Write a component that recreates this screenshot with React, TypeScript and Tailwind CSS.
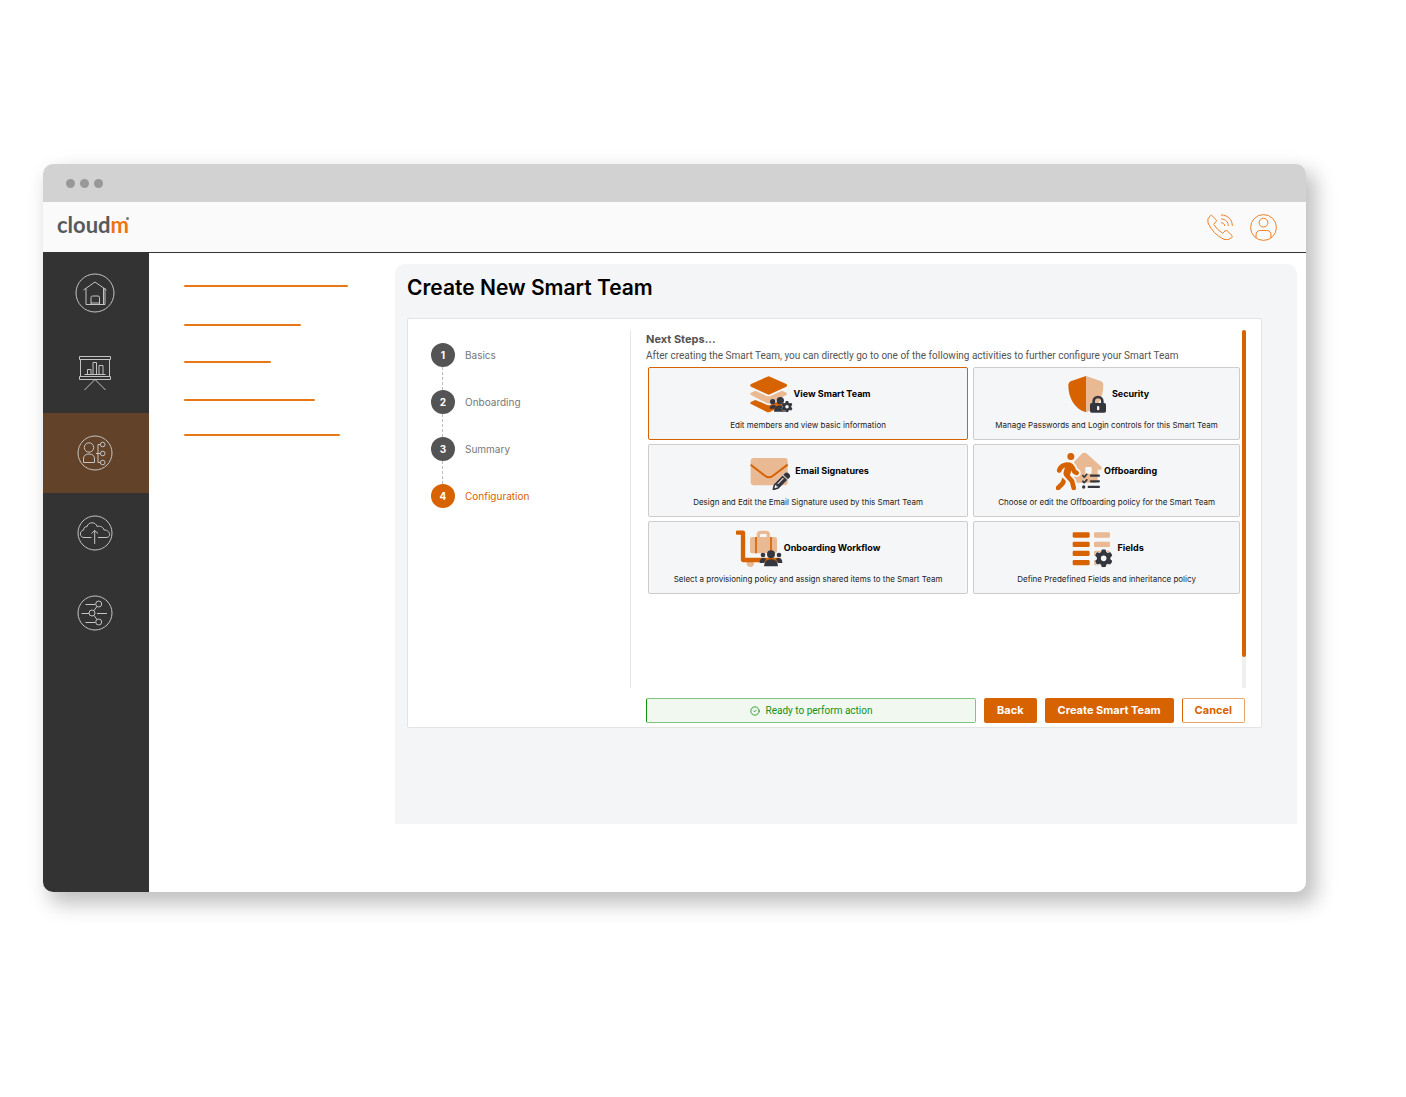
import { useState } from 'react';
import type { ReactNode } from 'react';
import clsx from 'clsx';
import { CircleCheck } from 'lucide-react';
import { FaGear, FaListCheck, FaPencil, FaPersonWalking } from 'react-icons/fa6';

const ORANGE = '#d66300';
const PEACH = '#e8b992';
const DARK = '#35373f';

function HomeIcon() {
  return (
    <svg width="40" height="40" viewBox="0 0 40 40" fill="none" stroke="currentColor">
      <circle cx="20" cy="20" r="19" />
      <path d="M8.5 17 20 9l11.5 8M11 15.5v16h19v-16M28.5 15v16M16 31.5v-7q0-1.5 1.5-1.5H23q1.5 0 1.5 1.5v7M16 30h8.5" />
    </svg>
  );
}

function ReportsIcon() {
  return (
    <svg width="36" height="36" viewBox="0 0 36 36" fill="none" stroke="currentColor">
      <path d="M2.5 1.5h31v3h-31zM3.5 4.5v17M32.5 4.5v17M2.5 21.5h31v3h-31zM18 24.5 7.5 35M18 24.5 28.5 35" />
      <path d="M7.5 19.5h21M10.5 19.5v-5H14v5M16 19.5v-12h3.5v12M22 19.5v-9h4v9" />
    </svg>
  );
}

function TeamsIcon() {
  return (
    <svg width="36" height="36" viewBox="0 0 36 36" fill="none" stroke="currentColor">
      <circle cx="18" cy="18" r="17" />
      <circle cx="12" cy="12.5" r="4.7" />
      <path d="M6.5 27.5V24q0-5 5.500-5t5.500 5v3.500zM23.500 9.500H21v18h2.500M19 18.500h4.500" />
      <circle cx="25.7" cy="9.5" r="2.3" />
      <circle cx="25.7" cy="18.5" r="2.3" />
      <circle cx="25.7" cy="27.5" r="2.3" />
    </svg>
  );
}

function MigrateIcon() {
  return (
    <svg width="36" height="36" viewBox="0 0 36 36" fill="none" stroke="currentColor">
      <circle cx="18" cy="18" r="17" />
      <path d="M14.5 22.5H7c-4.5 0-5-6.500-.3-7.500 0-3 1.800-3.500 3.300-3.300C11 6.500 19 6.500 20 11.500c3-1 6.500.5 7 3.500 6-.5 8 7.500 2 7.500h-8" />
      <path d="M17.700 29V15.500M14.500 18.500l3.200-3 3.300 3" />
    </svg>
  );
}

function WorkflowIcon() {
  return (
    <svg width="36" height="36" viewBox="0 0 36 36" fill="none" stroke="currentColor">
      <circle cx="18" cy="18" r="17" />
      <circle cx="21.7" cy="9" r="3" />
      <circle cx="15" cy="18" r="3" />
      <circle cx="21.7" cy="27" r="3" />
      <path d="M8.5 9.5H18M4.5 18.5H12M20 18.5h10M8.5 27.5H18M17 15.5l3-4M17 20.5l3 4" />
    </svg>
  );
}

function PhoneIcon() {
  return (
    <svg width="26" height="26" viewBox="0 0 78 78" fill="none" stroke="currentColor" strokeWidth="3">
      <path d="M14 4 27 17q3 3 0 6l-7 8q10 16 27 27l7-7q4-3 7 0l14 14q2 3-1 6-11 10-23 5Q19 61 3 27-1 14 10 5q2-2 4-1z" />
      <path d="M42 3c22 0 34 15 34 33M42 15c14 0 22 9 22 21M42 26c7 0 11 4 11 10" />
    </svg>
  );
}

function AccountIcon() {
  return (
    <svg width="27" height="27" viewBox="0 0 27 27" fill="none" stroke="currentColor">
      <circle cx="13.5" cy="13.5" r="12.9" />
      <circle cx="13.5" cy="8.7" r="4.4" />
      <path d="M6 24v-3q0-4.5 4.500-4.500h6q4.500 0 4.500 4.500v3" />
    </svg>
  );
}

// All activity icons share a 144x120 canvas shown at a third of that size.
function ActivityIcon({ children }: { children: ReactNode }) {
  return (
    <svg width="48" height="40" viewBox="0 0 144 120" className="shrink-0">
      {children}
    </svg>
  );
}

function LayersArt() {
  return (
    <ActivityIcon>
      <path d="M64 8q4-2 8 0l49 22q5 4 0 8L72 61q-4 2-8 0L15 38q-5-4 0-8z" fill={ORANGE} />
      <path d="m28 50 34 16q6 2 12 0l34-16 13 6q5 4 0 7L74 87q-6 3-12 0L15 63q-5-3 0-7z" fill={PEACH} />
      <path d="m28 78 34 14q6 3 12 0l34-14 13 6q5 4 0 6l-48 23q-6 3-12 0L15 90q-5-3 0-6z" fill={ORANGE} />
      <path d="M112 76h20v36h-20z" fill="#f5f6f8" />
      <g fill={DARK}>
        <circle cx="80" cy="83" r="8" />
        <circle cx="103" cy="80" r="11" />
        <path d="M71 104q0-11 10-11 6 0 9 3l-6 8zM84 113q0-19 19-19 14 0 18 19z" />
      </g>
      <FaGear x={106} y={81} size={34} color={DARK} stroke="#f5f6f8" strokeWidth={30} paintOrder="stroke" />
    </ActivityIcon>
  );
}

function ShieldArt() {
  return (
    <ActivityIcon>
      <path d="M66 6 20 22q-7 3-7 11c0 38 18 72 53 82z" fill={ORANGE} />
      <path d="m66 6 46 16q6 3 6 11c0 38-17 72-52 82z" fill={PEACH} />
      <path d="M89 90V82a13 13 0 0 1 26 0v8" fill="none" stroke={DARK} strokeWidth="8" />
      <rect x="78" y="87" width="48" height="29" rx="5" fill={DARK} />
      <rect x="99" y="96" width="7" height="13" rx="3" fill="#fff" />
    </ActivityIcon>
  );
}

function EnvelopeArt() {
  return (
    <ActivityIcon>
      <rect x="11" y="21" width="111" height="82" rx="9" fill={PEACH} />
      <path d="m11 41 44 34q11 8 22 0l45-34" fill="none" stroke={ORANGE} strokeWidth="6" />
      <FaPencil x={76} y={64} size={54} color={DARK} stroke="#f5f6f8" strokeWidth={20} paintOrder="stroke" />
    </ActivityIcon>
  );
}

function WalkerArt() {
  return (
    <ActivityIcon>
      <path d="M79 7q6-4 12 0l45 40q4 7-3 9h-8v31q0 8-8 8H62q-8 0-8-8V33z" fill={PEACH} />
      <rect x="88" y="48" width="19" height="20" rx="2" fill="#f5f6f8" />
      <FaPersonWalking x={-22} y={6} size={112} color={ORANGE} stroke="#f5f6f8" strokeWidth={50} paintOrder="stroke" />
      <FaListCheck x={78} y={64} size={54} color={DARK} />
    </ActivityIcon>
  );
}

function TrolleyArt() {
  return (
    <ActivityIcon>
      <path d="M67 29V20q0-7 7-7h16q7 0 7 7v9" fill="none" stroke={PEACH} strokeWidth="10" />
      <rect x="42" y="27" width="81" height="49" rx="7" fill={PEACH} />
      <path d="M60 27v49M105 27v49" stroke={ORANGE} strokeWidth="5" />
      <circle cx="43" cy="106" r="11" fill={PEACH} />
      <path d="M5 14h16v82h108" fill="none" stroke={ORANGE} strokeWidth="13" strokeLinecap="round" strokeLinejoin="round" />
      <g fill={DARK}>
        <circle cx="81" cy="81" r="7" />
        <circle cx="129" cy="81" r="7" />
        <circle cx="105" cy="79" r="12" />
        <path d="M71 105q0-15 11-15 6 0 8 3l-6 12zM139 105q0-15-11-15-6 0-8 3l6 12zM84 115q0-21 21-21t21 21z" />
      </g>
    </ActivityIcon>
  );
}

function FieldsArt() {
  return (
    <ActivityIcon>
      {[13, 41, 68, 96].map(y => (
        <g key={y}>
          <rect x="11" y={y} width="51" height="16" rx="4" fill={ORANGE} />
          <rect x="75" y={y} width="48" height="16" rx="4" fill={PEACH} />
        </g>
      ))}
      <circle cx="104" cy="91" r="16" fill="#f5f6f8" />
      <FaGear x={77} y={64} size={54} color={DARK} stroke="#f5f6f8" strokeWidth={30} paintOrder="stroke" />
    </ActivityIcon>
  );
}

const navItems = [
  { id: 'home', label: 'Home', icon: <HomeIcon /> },
  { id: 'reports', label: 'Reports', icon: <ReportsIcon /> },
  { id: 'teams', label: 'Teams', icon: <TeamsIcon /> },
  { id: 'migrate', label: 'Migrate', icon: <MigrateIcon /> },
  { id: 'workflows', label: 'Workflows', icon: <WorkflowIcon /> },
];

// Placeholder lines for the secondary menu
const menuLines = [
  'w-[164px]',
  'w-[117px] mt-[37px]',
  'w-[87px] mt-[35px]',
  'w-[131px] mt-[36px]',
  'w-[156px] mt-[33px]',
];

const steps = ['Basics', 'Onboarding', 'Summary', 'Configuration'];

const activities = [
  { id: 'view', title: 'View Smart Team', text: 'Edit members and view basic information', art: <LayersArt /> },
  { id: 'security', title: 'Security', text: 'Manage Passwords and Login controls for this Smart Team', art: <ShieldArt /> },
  { id: 'email', title: 'Email Signatures', text: 'Design and Edit the Email Signature used by this Smart Team', art: <EnvelopeArt /> },
  { id: 'offboarding', title: 'Offboarding', text: 'Choose or edit the Offboarding policy for the Smart Team', art: <WalkerArt /> },
  { id: 'onboarding', title: 'Onboarding Workflow', text: 'Select a provisioning policy and assign shared items to the Smart Team', art: <TrolleyArt /> },
  { id: 'fields', title: 'Fields', text: 'Define Predefined Fields and inheritance policy', art: <FieldsArt /> },
];

function Header() {
  return (
    <header className="flex h-[51px] items-center justify-between border-b border-[#333] bg-[#fafafa] pl-[14px] pr-[29px]">
      <a href="#" className="relative pb-1 font-['Lato',sans-serif] text-[22px] font-bold leading-6 text-[#58595b]">
        cloud<span className="text-[#ee7410]">m</span>
        <span className="absolute right-0 top-1 size-[3px] rounded-full bg-[#777]" />
      </a>
      <div className="flex items-center gap-[17px] text-[#ee7f22]">
        <button aria-label="Call support"><PhoneIcon /></button>
        <button aria-label="Account"><AccountIcon /></button>
      </div>
    </header>
  );
}

function Sidebar() {
  return (
    <nav className="w-[106px] shrink-0 bg-[#333]">
      {navItems.map(item => (
        <a
          key={item.id}
          href={`#${item.id}`}
          aria-label={item.label}
          className={clsx(
            'flex h-20 items-center justify-center pr-[3px] text-[#c4c4c4]',
            item.id === 'teams' && 'bg-[#62432a]'
          )}
        >
          {item.icon}
        </a>
      ))}
    </nav>
  );
}

function Stepper() {
  return (
    <ol className="w-[223px] shrink-0 border-r border-[#e8e8e8] pl-[23px] pt-[13px]">
      {steps.map((step, i) => {
        const current = i === steps.length - 1;
        return (
          <li key={step}>
            <div className="flex items-center gap-[10px]">
              <span
                className={clsx(
                  'flex size-6 items-center justify-center rounded-full text-[10px] font-bold text-white',
                  current ? 'bg-[#d66300]' : 'bg-[#545454]'
                )}
              >
                {i + 1}
              </span>
              <span className={clsx('text-[10px]', current ? 'text-[#d66300]' : 'text-[#777]')}>{step}</span>
            </div>
            {!current && <div className="ml-[11px] h-[23px] border-l border-dashed border-[#bbb]" />}
          </li>
        );
      })}
    </ol>
  );
}

export default function App() {
  const [selected, setSelected] = useState('view');

  return (
    <div className="min-h-screen bg-white pb-[205px] pl-[43px] pr-[100px] pt-[164px] font-['Inter','Liberation_Sans',sans-serif]">
      <div className="overflow-hidden rounded-[10px] bg-white shadow-[8px_10px_20px_2px_rgba(0,0,0,0.25)]">
        <div className="flex h-[38px] items-center gap-[5px] bg-[#d2d2d2] pl-[23px]">
          <span className="size-[9px] rounded-full bg-[#989898]" />
          <span className="size-[9px] rounded-full bg-[#989898]" />
          <span className="size-[9px] rounded-full bg-[#989898]" />
        </div>
        <Header />

        <div className="flex min-h-[639px]">
          <Sidebar />
          <div className="w-[246px] shrink-0 pl-[35px] pt-8">
            {menuLines.map(line => (
              <div key={line} className={clsx('h-[2px] rounded-full bg-[#e67817]', line)} />
            ))}
          </div>

          <main className="mb-[68px] mr-[9px] mt-[11px] min-w-0 flex-1 rounded-t-[10px] bg-[#f4f5f7] pl-3 pr-[35px] pt-3">
            <h1 className="text-[21px] font-semibold leading-6 text-black">Create New Smart Team</h1>

            <section className="mt-[18px] rounded-xs border border-[#e2e4e6] bg-white pb-1 pr-[15px] pt-[11px]">
              <div className="flex min-h-[358px]">
                <Stepper />
                <div className="flex min-w-0 flex-1 pl-[15px]">
                  <div className="min-w-0 flex-1">
                    <h2 className="text-[11px] font-bold leading-[18px] text-[#545454]">Next Steps...</h2>
                    <p className="font-['Roboto',sans-serif] text-[10px] leading-4 text-[#545454]">
                      After creating the Smart Team, you can directly go to one of the following activities to further configure your Smart Team
                    </p>
                    <div className="mx-[2px] mt-[3px] grid grid-cols-[6fr_5fr] gap-x-[5px] gap-y-1">
                      {activities.map(activity => (
                        <button
                          key={activity.id}
                          onClick={() => setSelected(activity.id)}
                          className={clsx(
                            'flex h-[73px] flex-col items-center rounded-xs border bg-[#f5f6f8] pt-[6px]',
                            selected === activity.id ? 'border-[#d66300]' : 'border-[#ccc]'
                          )}
                        >
                          <span className="flex items-center text-[9px] font-bold text-black">
                            {activity.art}
                            {activity.title}
                          </span>
                          <span className="mt-[5px] text-[8px] leading-3 text-[#222]">{activity.text}</span>
                        </button>
                      ))}
                    </div>
                  </div>
                  <div className="w-1 bg-[#f0f0f0]">
                    <div className="h-[327px] rounded-full bg-[#d66300]" />
                  </div>
                </div>
              </div>

              <div className="ml-[238px] mr-px mt-[10px] flex gap-2">
                <p className="flex h-[25px] flex-1 items-center justify-center gap-[6px] rounded-xs border border-[#80c480] border-l-[#109010] bg-[#f0f8f0] font-['Roboto',sans-serif] text-[10px] text-[#149014]">
                  <CircleCheck size={10} />
                  Ready to perform action
                </p>
                <button className="h-[25px] rounded-xs bg-[#d66300] px-[13px] text-[11px] font-bold text-white">Back</button>
                <button className="h-[25px] rounded-xs bg-[#d66300] px-[13px] text-[11px] font-bold text-white">Create Smart Team</button>
                <button className="h-[25px] rounded-xs border border-[#eba56a] border-l-[#d66300] bg-white px-3 text-[11px] font-bold text-[#d66300]">Cancel</button>
              </div>
            </section>
          </main>
        </div>
      </div>
    </div>
  );
}
